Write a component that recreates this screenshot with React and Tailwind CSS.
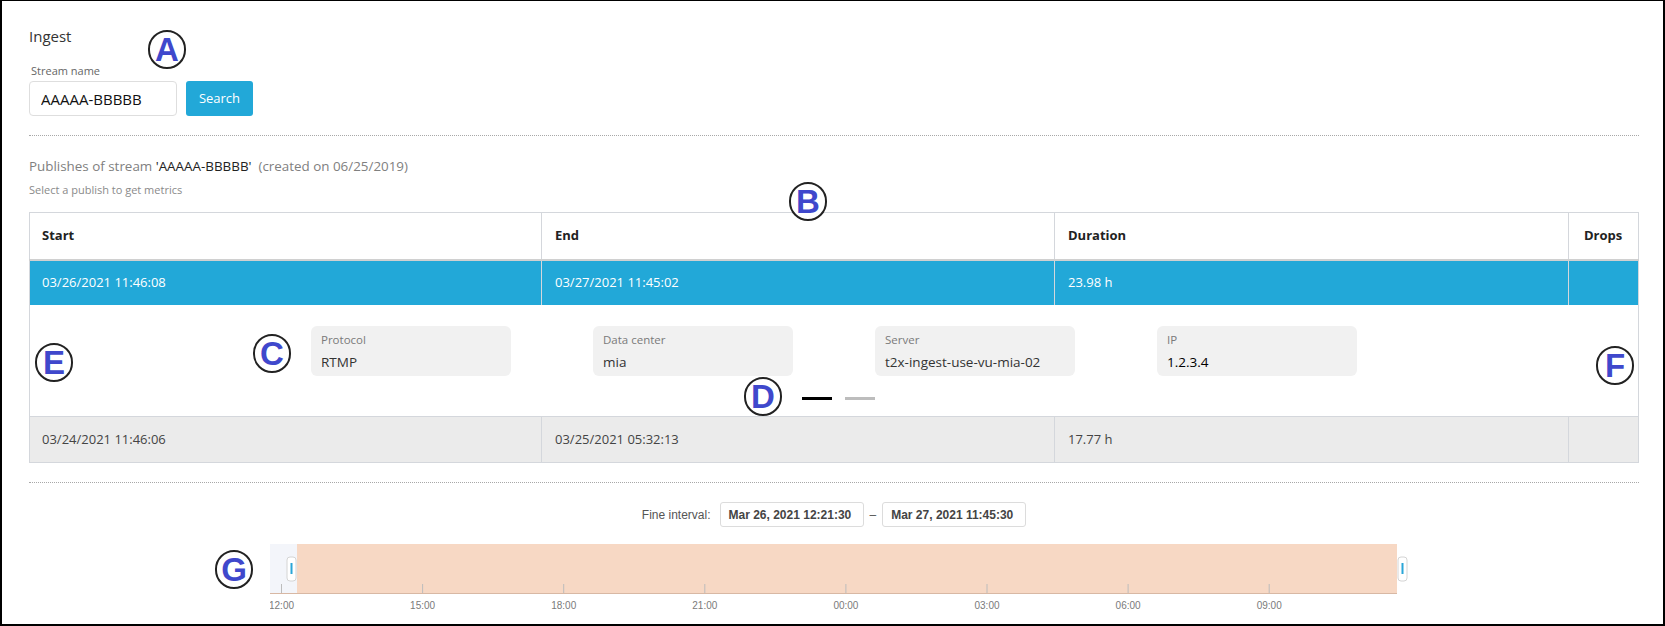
import React from "react";

const marks = [
  { l: "A", x: 165, y: 48 },
  { l: "B", x: 806, y: 200 },
  { l: "C", x: 270, y: 352 },
  { l: "D", x: 761, y: 395 },
  { l: "E", x: 52, y: 361 },
  { l: "F", x: 1613, y: 364 },
  { l: "G", x: 232, y: 568 },
];

const details = [
  { label: "Protocol", value: "RTMP" },
  { label: "Data center", value: "mia" },
  { label: "Server", value: "t2x-ingest-use-vu-mia-02" },
  { label: "IP", value: "1.2.3.4", dark: true },
];

const ticks = ["12:00", "15:00", "18:00", "21:00", "00:00", "03:00", "06:00", "09:00"];

function Mark({ l, x, y }) {
  return (
    <div
      className="absolute w-[38px] h-[39px] -ml-[19px] -mt-[19px] rounded-full border-2 border-[#222] bg-white flex items-center justify-center text-[#3f48cc] font-bold text-[33px] leading-none font-['Liberation_Sans',Arial,sans-serif]"
      style={{ left: x, top: y }}
    >
      {l}
    </div>
  );
}

function Timeline() {
  return (
    <svg width="1140" height="72" className="block ml-[241px]">
      <rect x="0" y="0" width="27" height="49" fill="#f3f5fa" />
      <rect x="27" y="0" width="1100" height="49" fill="#f7d8c4" />
      <line x1="0" y1="49.5" x2="1127" y2="49.5" stroke="#d8b8a4" />
      {ticks.map((t, i) => {
        const x = 11.5 + i * 141.1;
        return (
          <g key={t}>
            <line x1={x} y1="40" x2={x} y2="49" stroke="#bcbcbc" />
            <text
              x={x}
              y="64.5"
              textAnchor="middle"
              fontSize="10"
              fill="#7a7a7a"
              fontFamily="Liberation Sans, Arial, sans-serif"
            >
              {t}
            </text>
          </g>
        );
      })}
      <rect x="17" y="13" width="9" height="24" rx="3" fill="#fff" stroke="#d4d4d4" />
      <rect x="20.5" y="19" width="2" height="11" fill="#2aa6d8" />
      <rect x="1128" y="13" width="9" height="24" rx="3" fill="#fff" stroke="#d4d4d4" />
      <rect x="1131.5" y="19" width="2" height="11" fill="#2aa6d8" />
    </svg>
  );
}

export default function App() {
  return (
    <div className="relative w-[1665px] h-[626px] overflow-hidden bg-white border-2 border-t border-black font-['Open_Sans',sans-serif]">
      <div className="pl-[27px] pr-[24px] pt-[25px]">
        <h1 className="text-[15px] leading-[20px] text-[#333]">Ingest</h1>
        <div className="mt-[17px] ml-[2px] text-[11px] leading-[15px] text-[#666]">Stream name</div>
        <div className="mt-[3px] flex gap-[9px]">
          <input
            readOnly
            value="AAAAA-BBBBB"
            className="w-[148px] h-[35px] rounded-[4px] border border-[#dedede] px-[11px] text-[15px] text-[#111] outline-none"
          />
          <button className="w-[67px] h-[35px] rounded-[3px] bg-[#22a8d8] text-white text-[13px]">Search</button>
        </div>

        <div className="mt-[19px] border-t border-dotted border-[#a8a8a8]" />

        <div className="mt-[21px] text-[13.4px] leading-[18px] text-[#808080]">
          Publishes of stream <span className="text-[#222]">'AAAAA-BBBBB'</span>&nbsp; (created on 06/25/2019)
        </div>
        <div className="mt-[7px] text-[11px] leading-[15px] text-[#8a8a8a]">Select a publish to get metrics</div>

        <table className="mt-[15px] w-[1610px] table-fixed border-collapse border border-[#d4d7dc] text-[13px]">
          <colgroup>
            <col className="w-[512px]" />
            <col className="w-[513px]" />
            <col className="w-[514px]" />
            <col />
          </colgroup>
          <thead>
            <tr className="h-[47px] border-b-2 border-[#d0d0d0] text-left text-[#222]">
              <th className="pl-[12px] font-bold border-r border-[#d4d7dc]">Start</th>
              <th className="pl-[13px] font-bold border-r border-[#d4d7dc]">End</th>
              <th className="pl-[13px] font-bold border-r border-[#d4d7dc]">Duration</th>
              <th className="pl-[15px] font-bold">Drops</th>
            </tr>
          </thead>
          <tbody>
            <tr className="h-[45px] bg-[#22a8d8] text-white">
              <td className="pl-[12px] border-r border-[#d4d7dc]">03/26/2021 11:46:08</td>
              <td className="pl-[13px] border-r border-[#d4d7dc]">03/27/2021 11:45:02</td>
              <td className="pl-[13px] border-r border-[#d4d7dc]">23.98 h</td>
              <td />
            </tr>
            <tr className="h-[112px] border-b border-[#d4d7dc]">
              <td colSpan={4} className="align-top">
                <div className="flex justify-center gap-[82px] pt-[21px]">
                  {details.map((d) => (
                    <div key={d.label} className="w-[200px] h-[50px] rounded-[6px] bg-[#f1f1f1] pl-[10px] pt-[5px]">
                      <div className="text-[11.5px] leading-[18px] text-[#7a7a7a]">{d.label}</div>
                      <div className={`text-[13.5px] leading-[26px] ${d.dark ? "text-black" : "text-[#333]"}`}>{d.value}</div>
                    </div>
                  ))}
                </div>
                <div className="mt-[21px] flex justify-center gap-[13px] pl-[8px]">
                  <span className="w-[30px] h-[3px] bg-black" />
                  <span className="w-[30px] h-[3px] bg-[#bdbdbd]" />
                </div>
              </td>
            </tr>
            <tr className="h-[46px] bg-[#ebebeb] text-[#444]">
              <td className="pl-[12px] border-r border-[#d4d7dc]">03/24/2021 11:46:06</td>
              <td className="pl-[13px] border-r border-[#d4d7dc]">03/25/2021 05:32:13</td>
              <td className="pl-[13px] border-r border-[#d4d7dc]">17.77 h</td>
              <td />
            </tr>
          </tbody>
        </table>

        <div className="mt-[19px] border-t border-dotted border-[#a8a8a8]" />

        <div className="mt-[19px] flex items-center justify-center gap-[6px] font-['Liberation_Sans',Arial,sans-serif] text-[12px]">
          <span className="text-[#555] mr-[3px]">Fine interval:</span>
          <span className="w-[144px] h-[25px] rounded-[3px] border border-[#dcdcdc] pl-[8px] flex items-center font-bold text-[#444]">
            Mar 26, 2021 12:21:30
          </span>
          <span className="text-[#555]">–</span>
          <span className="w-[144px] h-[25px] rounded-[3px] border border-[#dcdcdc] pl-[8px] flex items-center font-bold text-[#444]">
            Mar 27, 2021 11:45:30
          </span>
        </div>

        <div className="mt-[17px]">
          <Timeline />
        </div>
      </div>

      {marks.map((m) => (
        <Mark key={m.l} {...m} />
      ))}
    </div>
  );
}
